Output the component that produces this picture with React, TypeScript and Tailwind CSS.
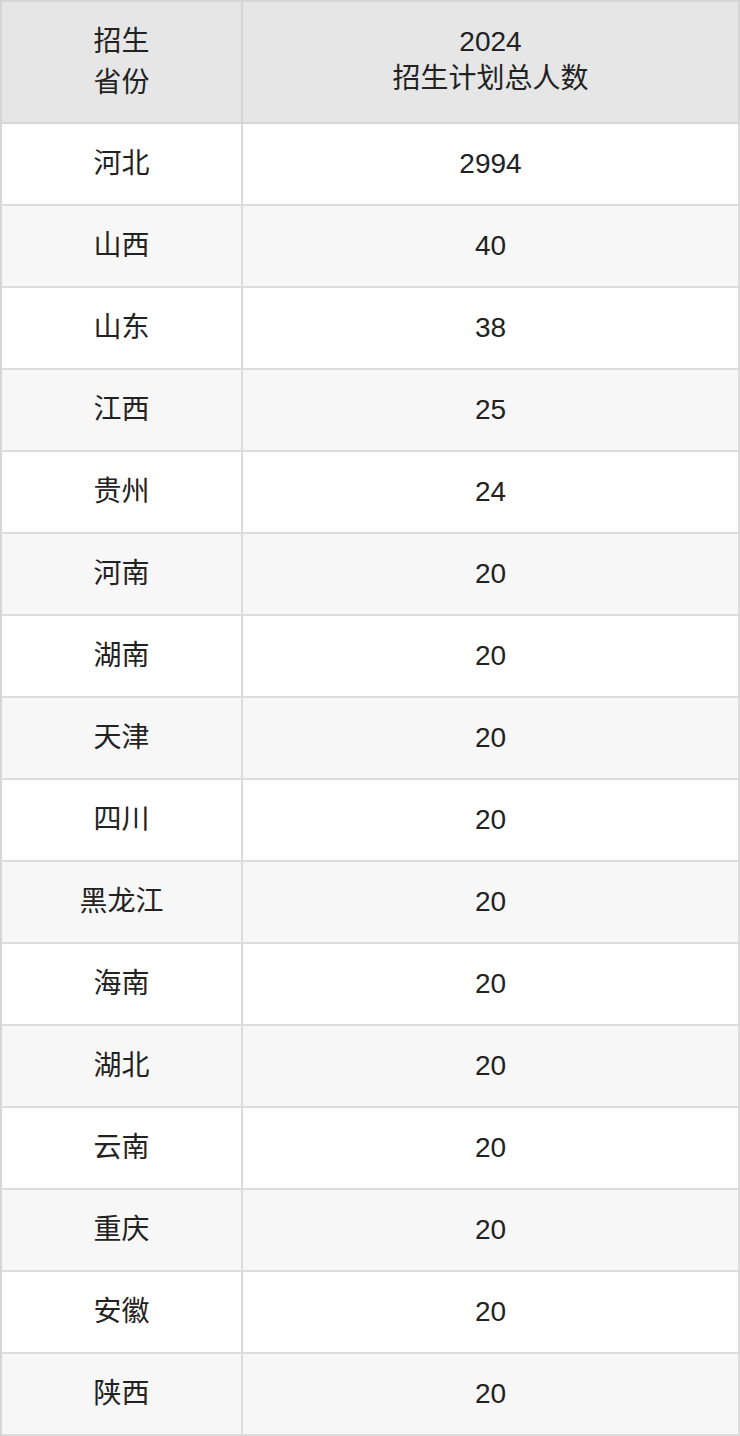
const rows: [string, string][] = [
  ["河北", "2994"],
  ["山西", "40"],
  ["山东", "38"],
  ["江西", "25"],
  ["贵州", "24"],
  ["河南", "20"],
  ["湖南", "20"],
  ["天津", "20"],
  ["四川", "20"],
  ["黑龙江", "20"],
  ["海南", "20"],
  ["湖北", "20"],
  ["云南", "20"],
  ["重庆", "20"],
  ["安徽", "20"],
  ["陕西", "20"],
];

const font = {
  fontFamily: '"Liberation Sans", "Noto Sans CJK SC", sans-serif',
};

export default function App() {
  return (
    <div className="w-[740px] bg-white text-[#222]" style={font}>
      <div className="border-l-2 border-t-2 border-[#d6d6d6]">
        <div className="flex bg-[#e6e6e6]">
          <div className="flex h-[122px] w-[241px] items-center justify-center border-b-2 border-r-2 border-[#d6d6d6] text-center text-[28px] leading-[41px]">
            招生
            <br />
            省份
          </div>
          <div className="flex h-[122px] flex-1 items-center justify-center border-b-2 border-r-2 border-[#d6d6d6] pb-[5px] text-center text-[28px] leading-[37px]">
            2024
            <br />
            招生计划总人数
          </div>
        </div>
        {rows.map(([prov, n], i) => (
          <div key={prov} className={i % 2 === 1 ? "flex bg-[#f7f7f7]" : "flex bg-white"}>
            <div className="flex h-[82px] w-[241px] items-center justify-center border-b-2 border-r-2 border-[#dcdcdc] text-[28px]">
              {prov}
            </div>
            <div className="flex h-[82px] flex-1 items-center justify-center border-b-2 border-r-2 border-[#dcdcdc] text-[28px]">
              {n}
            </div>
          </div>
        ))}
      </div>
    </div>
  );
}
